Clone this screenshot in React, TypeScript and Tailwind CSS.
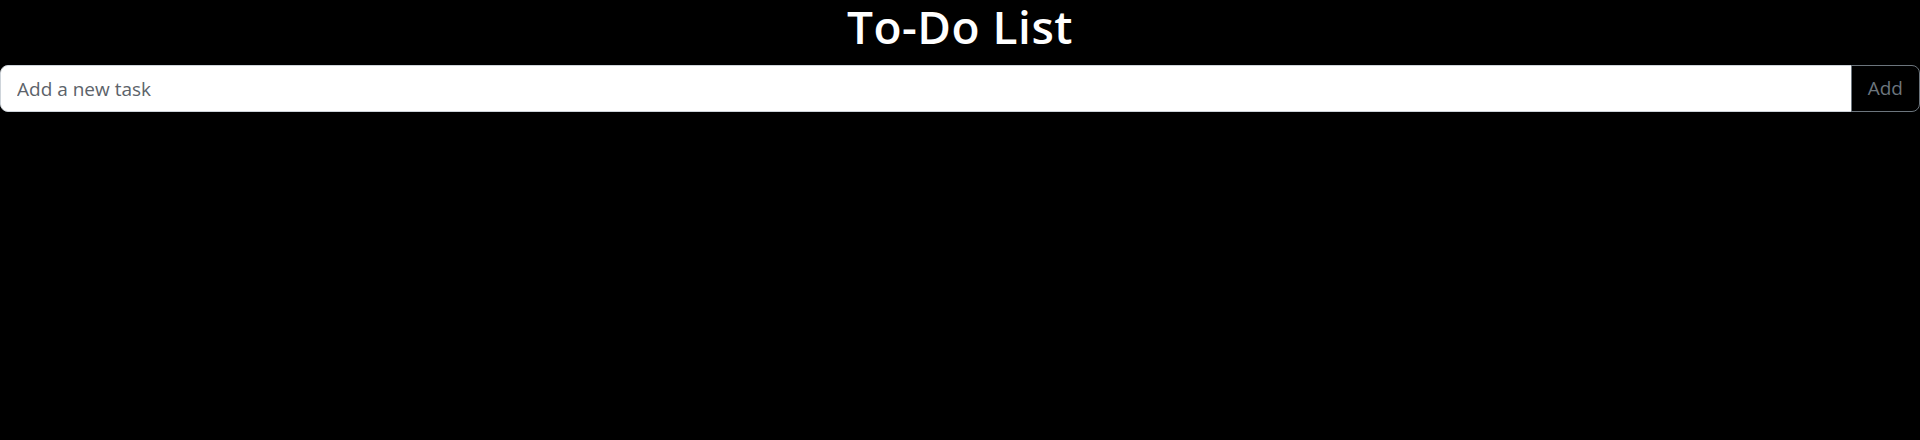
import React, { useState } from 'react';

export default function App() {
  const [task, setTask] = useState('');

  return (
    <div className="min-h-[440px] w-full bg-black text-white font-['Open_Sans','Noto_Sans',sans-serif]">
      <h1 className="text-center text-[46px] leading-[52px] font-semibold tracking-[0.5px] mb-[13px]">
        To-Do List
      </h1>
      <div className="flex w-full">
        <input
          type="text"
          value={task}
          onChange={e => setTask(e.target.value)}
          placeholder="Add a new task"
          className="flex-1 min-w-0 h-[47px] bg-white text-[#212529] placeholder:text-[#5c636a] text-[19px] leading-[29px] px-4 py-2 border border-[#ced4da] rounded-l-lg outline-none"
        />
        <button className="h-[47px] px-4 bg-black text-[#6c757d] text-[19px] leading-[29px] border border-[#6c757d] rounded-r-lg -ml-px">
          Add
        </button>
      </div>
    </div>
  );
}
